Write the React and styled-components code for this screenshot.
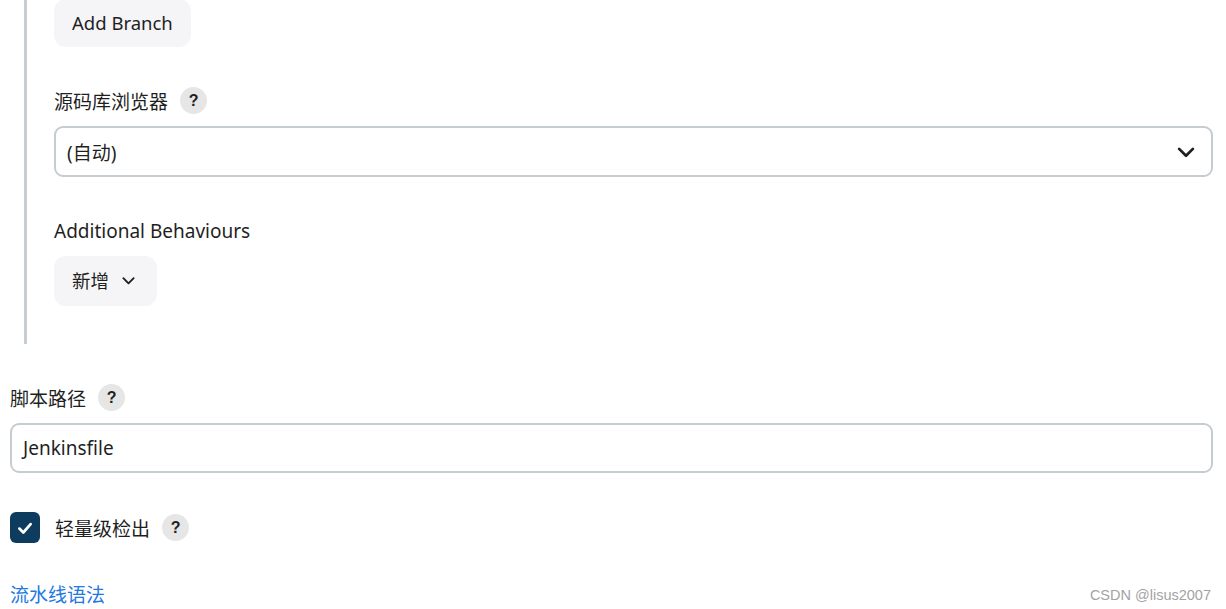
import React from "react";
import styled, { createGlobalStyle } from "styled-components";

const Global = createGlobalStyle`
  html, body { margin: 0; padding: 0; background: #ffffff; }
  body {
    font-family: "Noto Sans", "Noto Sans CJK SC", sans-serif;
    font-variant-ligatures: none;
    color: #1f1f1f;
    overflow: hidden;
  }
  * { box-sizing: border-box; }
`;

const Page = styled.div`
  position: relative;
  width: 1226px;
  height: 609px;
  padding: 0 13px 0 10px;
  overflow: hidden;
`;

const Nested = styled.div`
  margin: -1px 0 0 14px;
  padding: 0 0 38px 27px;
  border-left: 3px solid #c5ced3;
  display: flex;
  flex-direction: column;
  align-items: flex-start;
`;

const Field = styled.div`
  display: flex;
  flex-direction: column;
  align-items: stretch;
  align-self: stretch;
  margin-top: 40px;
`;

const LabelRow = styled.div`
  display: flex;
  align-items: center;
  gap: 12px;
  height: 27px;
  margin-bottom: 12px;
  font-size: 19px;
  color: #1f1f1f;
`;

const Help = styled.span`
  width: 27px;
  height: 27px;
  border-radius: 50%;
  background: #e6e6e6;
  display: inline-flex;
  align-items: center;
  justify-content: center;
  font-family: "Liberation Sans", Arial, sans-serif;
  font-weight: 700;
  font-size: 16px;
  color: #1f1f1f;
`;

const SoftButton = styled.button`
  height: ${(p) => p.$h || 48}px;
  padding: 0 ${(p) => p.$pr || 18}px 2px 18px;
  border: none;
  border-radius: 12px;
  background: #f5f5f7;
  font-family: "Noto Sans", "Noto Sans CJK SC", sans-serif;
  font-size: 18.5px;
  color: #1f1f1f;
  display: inline-flex;
  align-items: center;
  gap: 12px;
  align-self: flex-start;
  cursor: pointer;
`;

const Control = styled.div`
  height: ${(p) => p.$h}px;
  border: 2px solid #c5cdd1;
  border-radius: 9px;
  background: #fff;
  display: flex;
  align-items: center;
  justify-content: space-between;
  padding: 0 15px 0 11px;
  font-size: 19px;
  color: #1f1f1f;
`;

const CheckRow = styled.div`
  display: flex;
  align-items: center;
  height: 31px;
  margin-top: 39px;
  font-size: 19px;
`;

const Box = styled.span`
  width: 30px;
  height: 31px;
  border-radius: 6px;
  background: #0d3c5f;
  display: inline-flex;
  align-items: center;
  justify-content: center;
  margin-right: 15px;
`;

const CheckLabel = styled.span`
  margin-right: 12px;
`;

const Link = styled.a`
  display: block;
  margin-top: 39px;
  font-size: 19px;
  line-height: 27px;
  color: #2479df;
  text-decoration: none;
`;

const Watermark = styled.div`
  position: absolute;
  right: 15px;
  bottom: 6px;
  font-family: "Liberation Sans", Arial, sans-serif;
  font-size: 14.5px;
  color: #a3a3a3;
`;

const Chevron = ({ w = 16, sw = 2.2 }) => (
  <svg width={w} height={w} viewBox="0 0 16 16" fill="none">
    <path d="M2.5 5.5 L8 11 L13.5 5.5" stroke="#1f1f1f" strokeWidth={sw} strokeLinecap="round" strokeLinejoin="round" />
  </svg>
);

export default function App() {
  return (
    <>
      <Global />
      <Page>
        <Nested>
          <SoftButton $h={48}>Add Branch</SoftButton>
          <Field>
            <LabelRow>
              源码库浏览器<Help>?</Help>
            </LabelRow>
            <Control $h={51}>
              <span>(自动)</span>
              <Chevron w={20} sw={2.2} />
            </Control>
          </Field>
          <Field>
            <LabelRow>Additional Behaviours</LabelRow>
            <SoftButton $h={50} $pr={21}>
              新增
              <Chevron w={15} sw={2} />
            </SoftButton>
          </Field>
        </Nested>
        <Field>
          <LabelRow>
            脚本路径<Help>?</Help>
          </LabelRow>
          <Control $h={50}>
            <span>Jenkinsfile</span>
          </Control>
        </Field>
        <CheckRow>
          <Box>
            <svg width="18" height="18" viewBox="0 0 16 16" fill="none">
              <path d="M3 8.5 L6.5 12 L13 4.5" stroke="#fff" strokeWidth="2.4" strokeLinecap="round" strokeLinejoin="round" />
            </svg>
          </Box>
          <CheckLabel>轻量级检出</CheckLabel>
          <Help>?</Help>
        </CheckRow>
        <Link href="#">流水线语法</Link>
        <Watermark>CSDN @lisus2007</Watermark>
      </Page>
    </>
  );
}
